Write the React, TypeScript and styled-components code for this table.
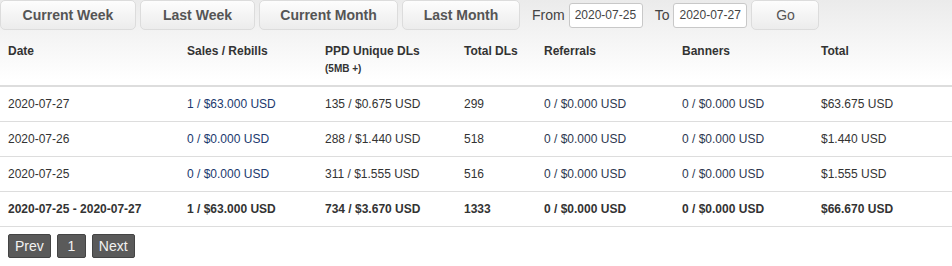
import styled, { createGlobalStyle } from "styled-components";

const GlobalStyle = createGlobalStyle`
    html, body {
        margin: 0;
        padding: 0;
        background: #fff;
    }
    body {
        font-family: "Liberation Sans", Arial, sans-serif;
        font-size: 12px;
        color: #333;
    }
`;

const STPage = styled.div`
    width: 952px;
    background: linear-gradient(to bottom, #ebebeb 0px, #ffffff 80px);
`;

const STToolbar = styled.div`
    display: flex;
    align-items: center;
    gap: 4px;
    height: 30px;
`;

const STRangeButton = styled.button<{ w: number }>`
    width: ${p => p.w}px;
    height: 30px;
    padding: 0;
    border: 1px solid #dcdcdc;
    border-radius: 5px;
    background: linear-gradient(to bottom, #fdfdfd, #ececec);
    color: #555;
    font-family: "Liberation Sans", Arial, sans-serif;
    font-size: 14px;
    font-weight: bold;
    white-space: nowrap;
    cursor: pointer;
`;

const STLabel = styled.span`
    font-size: 14px;
    color: #444;
    margin-left: 8px;
`;

const STDateInput = styled.input`
    width: 74px;
    height: 25px;
    box-sizing: border-box;
    padding: 0 5px;
    border: 1px solid #c8c8c8;
    border-radius: 3px;
    background: #fff;
    color: #444;
    font-family: "Liberation Sans", Arial, sans-serif;
    font-size: 12px;
    :focus { outline: none; }
`;

const STGoButton = styled(STRangeButton)`
    font-weight: normal;
`;

const STTable = styled.table`
    width: 952px;
    margin-top: 4px;
    border-collapse: collapse;
    table-layout: fixed;
`;

const STHeadCell = styled.th<{ w: number }>`
    width: ${p => p.w - 16}px;
    padding: 8px 8px 6px;
    text-align: left;
    vertical-align: top;
    font-size: 12px;
    line-height: 18px;
    font-weight: bold;
    color: #333;
    border-bottom: 2px solid #dddddd;
    height: 37px;
`;

const STHeadNote = styled.div`
    font-size: 10px;
    line-height: 12px;
    margin-top: 3px;
`;

const STRow = styled.tr<{ total?: boolean }>`
    font-weight: ${p => (p.total ? "bold" : "normal")};
`;

const STCell = styled.td<{ tone?: "link" | "muted" }>`
    padding: 8px;
    line-height: 18px;
    font-size: 12px;
    border-bottom: 1px solid #dddddd;
    white-space: nowrap;
    color: ${p => (p.tone === "link" ? "#20396e" : p.tone === "muted" ? "#2d3850" : "#333")};
`;

const STPager = styled.div`
    display: flex;
    gap: 6px;
    padding: 7px 8px 0;
`;

const STPageButton = styled.button`
    height: 24px;
    min-width: 29px;
    padding: 0 6px;
    border: 1px solid #444;
    border-radius: 2px;
    background: #5a5a5a;
    color: #f2f2f2;
    font-family: "Liberation Sans", Arial, sans-serif;
    font-size: 14px;
    cursor: pointer;
`;

interface IStatRow {
    date: string;
    sales: string;
    ppd: string;
    totalDls: string;
    referrals: string;
    banners: string;
    total: string;
}

const ranges = [
    { label: "Current Week", w: 136 },
    { label: "Last Week", w: 115 },
    { label: "Current Month", w: 139 },
    { label: "Last Month", w: 118 },
];

const columns = [
    { title: "Date", w: 179 },
    { title: "Sales / Rebills", w: 138 },
    { title: "PPD Unique DLs", w: 139, note: "(5MB +)" },
    { title: "Total DLs", w: 80 },
    { title: "Referrals", w: 138 },
    { title: "Banners", w: 139 },
    { title: "Total", w: 139 },
];

const rows: IStatRow[] = [
    { date: "2020-07-27", sales: "1 / $63.000 USD", ppd: "135 / $0.675 USD", totalDls: "299", referrals: "0 / $0.000 USD", banners: "0 / $0.000 USD", total: "$63.675 USD" },
    { date: "2020-07-26", sales: "0 / $0.000 USD", ppd: "288 / $1.440 USD", totalDls: "518", referrals: "0 / $0.000 USD", banners: "0 / $0.000 USD", total: "$1.440 USD" },
    { date: "2020-07-25", sales: "0 / $0.000 USD", ppd: "311 / $1.555 USD", totalDls: "516", referrals: "0 / $0.000 USD", banners: "0 / $0.000 USD", total: "$1.555 USD" },
];

const totals: IStatRow = {
    date: "2020-07-25 - 2020-07-27",
    sales: "1 / $63.000 USD",
    ppd: "734 / $3.670 USD",
    totalDls: "1333",
    referrals: "0 / $0.000 USD",
    banners: "0 / $0.000 USD",
    total: "$66.670 USD",
};

const StatRow = ({ row, total }: { row: IStatRow; total?: boolean }) => (
    <STRow total={total}>
        <STCell>{row.date}</STCell>
        <STCell tone={total ? undefined : "link"}>{row.sales}</STCell>
        <STCell>{row.ppd}</STCell>
        <STCell>{row.totalDls}</STCell>
        <STCell tone={total ? undefined : "muted"}>{row.referrals}</STCell>
        <STCell tone={total ? undefined : "muted"}>{row.banners}</STCell>
        <STCell>{row.total}</STCell>
    </STRow>
);

const App = (): JSX.Element => {
    return <STPage>
        <GlobalStyle />
        <STToolbar>
            {ranges.map(r => <STRangeButton key={r.label} w={r.w}>{r.label}</STRangeButton>)}
            <STLabel>From</STLabel>
            <STDateInput defaultValue="2020-07-25" />
            <STLabel>To</STLabel>
            <STDateInput defaultValue="2020-07-27" />
            <STGoButton w={68}>Go</STGoButton>
        </STToolbar>
        <STTable>
            <thead>
                <tr>
                    {columns.map(col => (
                        <STHeadCell key={col.title} w={col.w}>
                            {col.title}
                            {col.note && <STHeadNote>{col.note}</STHeadNote>}
                        </STHeadCell>
                    ))}
                </tr>
            </thead>
            <tbody>
                {rows.map(row => <StatRow key={row.date} row={row} />)}
                <StatRow row={totals} total />
            </tbody>
        </STTable>
        <STPager>
            <STPageButton>Prev</STPageButton>
            <STPageButton>1</STPageButton>
            <STPageButton>Next</STPageButton>
        </STPager>
    </STPage>
};

export default App;
